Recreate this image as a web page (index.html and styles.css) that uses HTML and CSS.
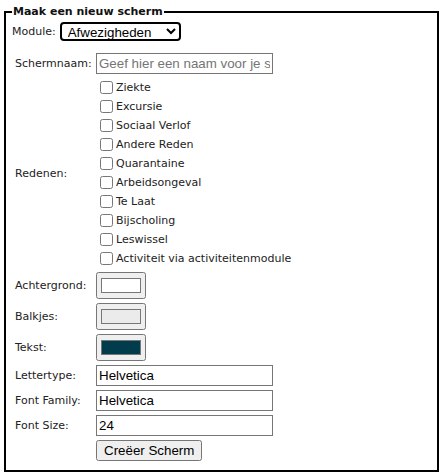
FILE: index.html
```html
<!DOCTYPE html>
<html>
<head>
<meta charset="utf-8">
<link rel="stylesheet" href="styles.css">
</head>
<body>
<fieldset class="box">
  <legend class="box-title">Maak een nieuw scherm</legend>
  <div class="module-row">
    <label class="lbl">Module:</label>
    <select class="module-select"><option>Afwezigheden</option></select>
  </div>
  <table class="form-table" cellspacing="2" cellpadding="1">
    <tr>
      <td class="lbl-cell">Schermnaam:</td>
      <td><input class="txt" type="text" placeholder="Geef hier een naam voor je scherm"></td>
    </tr>
    <tr>
      <td class="lbl-cell">Redenen:</td>
      <td class="reasons">
        <label class="reason"><input type="checkbox">Ziekte</label>
        <label class="reason"><input type="checkbox">Excursie</label>
        <label class="reason"><input type="checkbox">Sociaal Verlof</label>
        <label class="reason"><input type="checkbox">Andere Reden</label>
        <label class="reason"><input type="checkbox">Quarantaine</label>
        <label class="reason"><input type="checkbox">Arbeidsongeval</label>
        <label class="reason"><input type="checkbox">Te Laat</label>
        <label class="reason"><input type="checkbox">Bijscholing</label>
        <label class="reason"><input type="checkbox">Leswissel</label>
        <label class="reason"><input type="checkbox">Activiteit via activiteitenmodule</label>
      </td>
    </tr>
    <tr>
      <td class="lbl-cell">Achtergrond:</td>
      <td><input class="clr" type="color" value="#ffffff"></td>
    </tr>
    <tr>
      <td class="lbl-cell">Balkjes:</td>
      <td><input class="clr" type="color" value="#ebebeb"></td>
    </tr>
    <tr>
      <td class="lbl-cell">Tekst:</td>
      <td><input class="clr" type="color" value="#013c4d"></td>
    </tr>
    <tr>
      <td class="lbl-cell">Lettertype:</td>
      <td><input class="txt" type="text" value="Helvetica"></td>
    </tr>
    <tr>
      <td class="lbl-cell">Font Family:</td>
      <td><input class="txt" type="text" value="Helvetica"></td>
    </tr>
    <tr>
      <td class="lbl-cell">Font Size:</td>
      <td><input class="txt" type="text" value="24"></td>
    </tr>
    <tr>
      <td class="lbl-cell"></td>
      <td><button class="btn" type="button">Creëer Scherm</button></td>
    </tr>
  </table>
</fieldset>
</body>
</html>
```

FILE: styles.css
```css
html, body {
  margin: 0;
  padding: 0;
  background: #fff;
}
body {
  font-family: "DejaVu Sans", Verdana, sans-serif;
  font-size: 11px;
  color: #222;
}
.box {
  margin: 5px 4px 3px 4px;
  padding: 0 6px 6px 6px;
  border: 2px solid #000;
  min-width: 0;
}
.box-title {
  font-weight: bold;
  padding: 0 1px;
  font-size: 11px;
  color: #111;
}
.module-row {
  display: flex;
  align-items: center;
  gap: 4px;
  height: 20px;
  margin-top: 3px;
}
.module-select {
  font-family: "Liberation Sans", Arial, sans-serif;
  font-size: 13.33px;
  width: 121px;
  height: 19px;
  border: 2px solid #000;
  border-radius: 4px;
  background: #fff;
  color: #000;
  padding: 0 0 0 2px;
}
.form-table {
  margin-top: 9px;
  border-collapse: separate;
  border-spacing: 2px;
}
.form-table td {
  padding: 1px;
  vertical-align: middle;
}
.lbl-cell {
  width: 77px;
}
.txt {
  box-sizing: border-box;
  width: 177px;
  height: 21px;
  font-family: "Liberation Sans", Arial, sans-serif;
  font-size: 13.33px;
  border: 1px solid #767676;
  padding: 1px 2px;
  margin: 0;
  color: #000;
}
.txt::placeholder {
  color: #757575;
}
.reasons {
  line-height: 13px;
}
.reason {
  display: block;
  height: 19px;
}
.reason input {
  margin: 3px 3px 3px 4px;
  width: 13px;
  height: 13px;
  vertical-align: -3px;
}
.clr {
  margin: 0;
  width: 50px;
  height: 27px;
  display: block;
}
.btn {
  font-family: "Liberation Sans", Arial, sans-serif;
  font-size: 13.33px;
  height: 21px;
  padding: 1px 6px;
  margin: 0;
  color: #000;
}
```
